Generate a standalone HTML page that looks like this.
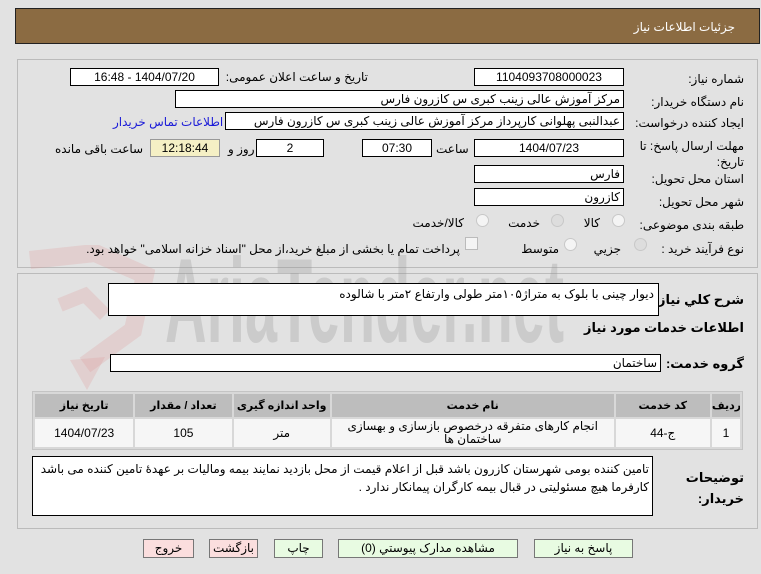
<!DOCTYPE html>
<html><head><meta charset="utf-8"><style>
*{box-sizing:border-box;margin:0;padding:0}
body{width:761px;height:574px;background:#e2e2e2;font-family:"Liberation Sans","DejaVu Sans",sans-serif;font-size:12px;color:#000;position:relative;overflow:hidden;direction:rtl}
.a{position:absolute;white-space:nowrap}
.box{position:absolute;background:#fff;border:1px solid #000;text-align:center;line-height:16px;font-size:12px}
.l{position:absolute;white-space:nowrap;text-align:right;font-size:12px}
.rad{position:absolute;width:13px;height:13px;border-radius:50%;border:1px solid #c8c8c8;background:#f4f4f4}
.btn{position:absolute;border:1px solid #777;height:19px;line-height:17px;text-align:center;font-size:12px}
table{position:absolute;left:32px;top:391px;width:711px;border-collapse:separate;border-spacing:2px;background:#d8d8d8;border:1px solid #c4c4c4;direction:ltr;table-layout:fixed}
th{background:#bdbdbd;height:23px;font-size:11px;font-weight:bold;white-space:nowrap;overflow:hidden}
td{background:#f6f6f6;height:28px;text-align:center;font-size:12px;line-height:13px}
</style></head><body>
<div class="a" style="left:15px;top:8px;width:745px;height:36px;background:#8b6b42;border:1px solid #222"></div>
<div class="a" style="right:26px;top:20px;color:#fff;font-size:12px">جزئیات اطلاعات نیاز</div>

<div class="a" style="left:17px;top:59px;width:741px;height:209px;border:1px solid #bbb"></div>
<div class="a" style="left:17px;top:273px;width:741px;height:256px;border:1px solid #bbb"></div>

<svg class="a" style="left:15px;top:245px" width="140" height="150" viewBox="0 0 140 150"><path d="M15 15 L80 8 L130 30 L118 85 L70 120" fill="none" stroke="rgba(225,150,150,0.25)" stroke-width="18"/><path d="M45 60 L70 50 L90 70" fill="none" stroke="rgba(225,150,150,0.25)" stroke-width="14"/><path d="M55 115 L72 145 L90 112" fill="rgba(225,150,150,0.25)"/></svg>
<div class="a" style="left:165px;top:236px;font-size:120px;font-weight:bold;color:rgba(150,150,150,0.3);direction:ltr;transform:scaleX(0.48);transform-origin:left top;line-height:130px">AriaTender.net</div>

<div class="l" style="right:17px;top:72px">شماره نیاز:</div>
<div class="box" style="left:474px;top:68px;width:150px;height:18px">1104093708000023</div>
<div class="l" style="right:393px;top:70px">تاریخ و ساعت اعلان عمومی:</div>
<div class="box" style="left:70px;top:68px;width:149px;height:18px">1404/07/20 - 16:48</div>

<div class="l" style="right:17px;top:95px">نام دستگاه خریدار:</div>
<div class="box" style="left:175px;top:90px;width:449px;height:18px;text-align:right;padding-right:3px">مرکز آموزش عالی زینب کبری س  کازرون فارس</div>

<div class="l" style="right:17px;top:116px">ایجاد کننده درخواست:</div>
<div class="box" style="left:225px;top:112px;width:399px;height:18px;text-align:right;padding-right:3px">عبدالنبی پهلوانی کارپرداز مرکز آموزش عالی زینب کبری س  کازرون فارس</div>
<div class="l" style="left:113px;top:115px;color:#1a1ad8">اطلاعات تماس خریدار</div>

<div class="l" style="right:17px;top:139px">مهلت ارسال پاسخ: تا</div>
<div class="l" style="right:17px;top:155px">تاریخ:</div>
<div class="box" style="left:474px;top:139px;width:150px;height:18px">1404/07/23</div>
<div class="l" style="left:436px;top:142px">ساعت</div>
<div class="box" style="left:362px;top:139px;width:70px;height:18px">07:30</div>
<div class="box" style="left:256px;top:139px;width:68px;height:18px">2</div>
<div class="l" style="left:228px;top:142px">روز و</div>
<div class="box" style="left:150px;top:139px;width:70px;height:18px;background:#f5f0c5;border-color:#999">12:18:44</div>
<div class="l" style="left:55px;top:142px">ساعت باقی مانده</div>

<div class="l" style="right:17px;top:172px">استان محل تحویل:</div>
<div class="box" style="left:474px;top:165px;width:150px;height:18px;text-align:right;padding-right:3px">فارس</div>
<div class="l" style="right:17px;top:195px">شهر محل تحویل:</div>
<div class="box" style="left:474px;top:188px;width:150px;height:18px;text-align:right;padding-right:3px">کازرون</div>

<div class="l" style="right:17px;top:218px">طبقه بندی موضوعی:</div>
<div class="rad" style="left:612px;top:214px"></div><div class="l" style="right:161px;top:216px">کالا</div>
<div class="rad" style="left:551px;top:214px;background:#ddd"></div><div class="l" style="right:221px;top:216px">خدمت</div>
<div class="rad" style="left:476px;top:214px"></div><div class="l" style="right:297px;top:216px">کالا/خدمت</div>

<div class="l" style="right:17px;top:242px">نوع فرآیند خرید :</div>
<div class="rad" style="left:634px;top:238px;background:#ddd"></div><div class="l" style="right:140px;top:242px">جزيي</div>
<div class="rad" style="left:564px;top:238px"></div><div class="l" style="right:202px;top:242px">متوسط</div>
<div class="a" style="left:465px;top:237px;width:13px;height:13px;border:1px solid #bbb;background:#f4f4f4"></div>
<div class="l" style="right:301px;top:242px">پرداخت تمام یا بخشی از مبلغ خرید،از محل "اسناد خزانه اسلامی" خواهد بود.</div>

<div class="l" style="right:17px;top:292px;font-weight:bold;font-size:13px">شرح کلي نياز:</div>
<div class="box" style="left:108px;top:283px;width:551px;height:33px;text-align:right;padding-right:4px;line-height:20px">دیوار چینی با بلوک به متراژ۱۰۵متر  طولی وارتفاع ۲متر با شالوده</div>
<div class="l" style="right:17px;top:320px;font-weight:bold;font-size:13px">اطلاعات خدمات مورد نیاز</div>
<div class="l" style="right:17px;top:356px;font-weight:bold;font-size:13px">گروه خدمت:</div>
<div class="box" style="left:110px;top:354px;width:551px;height:18px;text-align:right;padding-right:3px">ساختمان</div>

<table>
<colgroup><col style="width:98px"><col style="width:96px"><col style="width:96px"><col style="width:281px"><col style="width:94px"><col style="width:28px"></colgroup>
<tr><th>تاریخ نیاز</th><th>تعداد / مقدار</th><th>واحد اندازه گیری</th><th>نام خدمت</th><th>کد خدمت</th><th>ردیف</th></tr>
<tr><td>1404/07/23</td><td>105</td><td>متر</td><td style="direction:rtl">انجام کارهای متفرقه درخصوص بازسازی و بهسازی ساختمان ها</td><td>ج-44</td><td>1</td></tr>
</table>

<div class="l" style="right:17px;top:470px;font-weight:bold;font-size:13px">توضیحات</div>
<div class="l" style="right:17px;top:491px;font-weight:bold;font-size:13px">خریدار:</div>
<div class="box" style="left:32px;top:456px;width:621px;height:60px;text-align:right;padding:3px 3px 0;line-height:18px;white-space:normal">تامین کننده بومی شهرستان کازرون باشد قبل از اعلام قیمت از محل بازدید نمایند بیمه ومالیات بر عهدۀ تامین کننده می باشد کارفرما هیچ مسئولیتی در قبال بیمه کارگران پیمانکار ندارد .</div>

<div class="btn" style="left:534px;top:539px;width:99px;background:#e8fbe2">پاسخ به نیاز</div>
<div class="btn" style="left:338px;top:539px;width:180px;background:#e8fbe2">مشاهده مدارک پیوستي (0)</div>
<div class="btn" style="left:274px;top:539px;width:49px;background:#e8fbe2">چاپ</div>
<div class="btn" style="left:209px;top:539px;width:49px;background:#fbdede">بازگشت</div>
<div class="btn" style="left:143px;top:539px;width:51px;background:#fbdede">خروج</div>
</body></html>
